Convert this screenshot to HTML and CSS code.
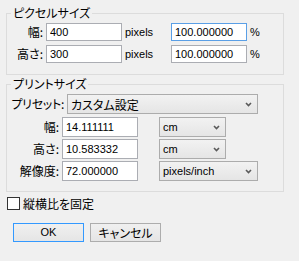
FILE: index.html
```html
<!DOCTYPE html>
<html><head>
<meta http-equiv="Content-Type" content="text/html; charset=utf-8">
<title>画像のサイズ</title>
<link rel="stylesheet" href="styles.css"></head>

<body>
<fieldset class="group">
<legend class="ja">ピクセルサイズ</legend>
<div class="pixelGrid">
	<span class="ja lbl">幅:</span>
	<input class="field" value="400">
	<span class="unit">pixels</span>
	<input class="field focus" value="100.000000">
	<span class="unit">%</span>

	<span class="ja lbl">高さ:</span>
	<input class="field" value="300">
	<span class="unit">pixels</span>
	<input class="field" value="100.000000">
	<span class="unit">%</span>
</div>
</fieldset>

<fieldset class="group print">
<legend class="ja">プリントサイズ</legend>
<div class="presetRow">
	<span class="ja lbl preLbl">プリセット:</span>
	<div class="combo wide"><span class="ja">カスタム設定</span><svg width="7" height="5" viewBox="0 0 7 5"><polyline points="1,1 3.5,3.5 6,1" fill="none" stroke="#5a5a5a" stroke-width="1.6"/></svg></div>
</div>
<div class="printGrid">
	<span class="ja lbl">幅:</span>
	<input class="field tall" value="14.111111">
	<div class="combo"><span>cm</span><svg width="7" height="5" viewBox="0 0 7 5"><polyline points="1,1 3.5,3.5 6,1" fill="none" stroke="#5a5a5a" stroke-width="1.6"/></svg></div>

	<span class="ja lbl">高さ:</span>
	<input class="field tall" value="10.583332">
	<div class="combo"><span>cm</span><svg width="7" height="5" viewBox="0 0 7 5"><polyline points="1,1 3.5,3.5 6,1" fill="none" stroke="#5a5a5a" stroke-width="1.6"/></svg></div>

	<span class="ja lbl">解像度:</span>
	<input class="field tall" value="72.000000">
	<div class="combo med"><span>pixels/inch</span><svg width="7" height="5" viewBox="0 0 7 5"><polyline points="1,1 3.5,3.5 6,1" fill="none" stroke="#5a5a5a" stroke-width="1.6"/></svg></div>
</div>
</fieldset>

<div class="checkRow">
	<span class="box"></span>
	<span class="ja">縦横比を固定</span>
</div>

<div class="buttons">
	<button class="button default">OK</button>
	<button class="button ja">キャンセル</button>
</div>
</body>
</html>
```

FILE: styles.css
```css
/* dialog body */
body {
	margin: 0;
	padding-top: 5px;
	background: #f0f0f0;
	color: #000;
	font: 11px "Liberation Sans", "Noto Sans CJK JP", sans-serif;
}
/* japanese text, proportional kana */
.ja {
	font-family: "Noto Sans CJK JP", sans-serif;
	font-size: 12px;
	font-feature-settings: "palt";
}

/* group boxes */
.group {
	box-sizing: border-box;
	width: 278px;
	min-width: 0;
	margin: 0 0 0 6px;
	padding: 2px 4px 11px 4px;
	border: 1px solid #dcdcdc;
}
.group legend {
	padding: 0 2px;
	line-height: 16px;
}
.print {
	margin-top: 1px;
	padding-bottom: 10px;
}

.lbl {
	text-align: right;
	line-height: 16px;
	white-space: nowrap;
}

.pixelGrid {
	display: grid;
	grid-template-columns: 32px 76px 43px 76px auto;
	column-gap: 3px;
	row-gap: 4px;
	align-items: center;
}

.presetRow {
	display: flex;
	align-items: center;
	gap: 3px;
	margin-bottom: 3px;
}
.preLbl {
	flex: 0 0 53px;
	letter-spacing: -0.3px;
}

.printGrid {
	display: grid;
	grid-template-columns: 48px 94px auto;
	column-gap: 3px;
	row-gap: 2px;
	align-items: center;
}

/* text fields */
.field {
	box-sizing: border-box;
	width: 76px;
	height: 18px;
	margin: 0;
	padding: 0 3px;
	border: 1px solid #abadb3;
	background: #fff;
	color: #000;
	font: 11px "Liberation Sans", sans-serif;
	outline: none;
}
.field.tall {
	height: 20px;
}
.field.focus {
	border-color: #5a9fe6;
}

/* drop down boxes */
.combo {
	box-sizing: border-box;
	display: flex;
	flex-shrink: 0;
	align-items: center;
	justify-content: space-between;
	width: 67px;
	height: 20px;
	padding: 0 5px 0 3px;
	border: 1px solid #acacac;
	background: linear-gradient(to bottom, #f2f2f2, #e5e5e5);
	white-space: nowrap;
}
.combo.wide {
	width: 191px;
}
.combo.med {
	width: 99px;
}

/* check box */
.checkRow {
	display: flex;
	align-items: center;
	gap: 3px;
	height: 13px;
	margin: 5px 0 0 7px;
}
.box {
	box-sizing: border-box;
	width: 13px;
	height: 13px;
	border: 1px solid #333;
	background: #fff;
}

/* push buttons */
.buttons {
	display: flex;
	gap: 6px;
	margin: 13px 0 0 13px;
}
.button {
	box-sizing: border-box;
	width: 71px;
	height: 19px;
	margin: 0;
	padding: 0;
	border: 1px solid #adadad;
	background: linear-gradient(to bottom, #f0f0f0, #e5e5e5);
	color: #000;
	font-size: 11px;
	line-height: 15px;
}
.button.default {
	border-color: #3399ff;
	font-family: "Liberation Sans", sans-serif;
}
.button.ja {
	font-size: 12px;
}
```
